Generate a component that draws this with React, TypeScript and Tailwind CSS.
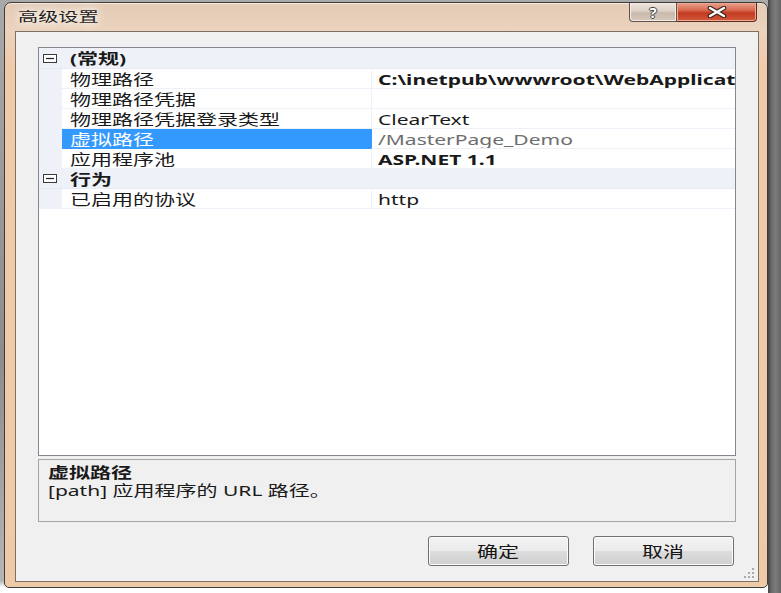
import type { ReactNode } from 'react'

/**
 * 高级设置 — Win7 style "Advanced Settings" dialog with a property grid.
 * The source screenshot is stretched horizontally, so text is widened with scale-x.
 */

type Row =
  | { kind: 'cat'; label: string }
  | { kind: 'prop'; name: string; value: string; tone?: 'bold' | 'readonly'; selected?: boolean }

const rows: Row[] = [
  { kind: 'cat', label: '(常规)' },
  { kind: 'prop', name: '物理路径', value: 'C:\\inetpub\\wwwroot\\WebApplication1', tone: 'bold' },
  { kind: 'prop', name: '物理路径凭据', value: '' },
  { kind: 'prop', name: '物理路径凭据登录类型', value: 'ClearText' },
  { kind: 'prop', name: '虚拟路径', value: '/MasterPage_Demo', tone: 'readonly', selected: true },
  { kind: 'prop', name: '应用程序池', value: 'ASP.NET 1.1', tone: 'bold' },
  { kind: 'cat', label: '行为' },
  { kind: 'prop', name: '已启用的协议', value: 'http' },
]

const font = "font-['Noto_Sans','Noto_Sans_CJK_SC',sans-serif]"

// widened text, as in the stretched screenshot
function W({ children, className = '' }: { children: ReactNode; className?: string }) {
  return (
    <span className={`inline-block origin-left scale-x-[1.4] whitespace-nowrap ${className}`}>
      {children}
    </span>
  )
}

function Collapse() {
  return (
    <svg width="14" height="9" viewBox="0 0 14 9" className="ml-[4px]">
      <rect x="0.5" y="0.5" width="13" height="8" fill="#fff" stroke="#3c3c3c" />
      <line x1="3" y1="4.5" x2="11" y2="4.5" stroke="#1e1e1e" strokeWidth="1.2" />
    </svg>
  )
}

function GridRow({ row, first }: { row: Row; first: boolean }) {
  const h = first ? 'h-[21px]' : 'h-[20px]'
  if (row.kind === 'cat') {
    return (
      <div className={`flex items-center ${h} bg-[#eef2f8] border-b border-[#e6ebf3]`}>
        <div className="w-[23px] flex items-center">
          <Collapse />
        </div>
        <div className="pl-[8px] leading-[20px] font-bold text-[#1a1a1a]">
          <W>{row.label}</W>
        </div>
      </div>
    )
  }
  const valueColor =
    row.tone === 'readonly' ? 'text-[#6d6d6d]' : 'text-[#1a1a1a]'
  return (
    <div className={`flex ${h}`}>
      <div className="w-[23px] bg-[#eef2f8]" />
      <div
        className={`w-[309px] overflow-hidden pl-[8px] leading-[20px] border-b ${
          row.selected ? 'bg-[#3399ff] text-white border-[#3399ff]' : 'bg-white text-[#1a1a1a] border-[#eef2f8]'
        }`}
      >
        <W>{row.name}</W>
      </div>
      <div
        className={`flex-1 overflow-hidden pl-[6px] leading-[20px] bg-white border-b border-[#eef2f8] border-l ${
          row.selected ? 'border-l-[#3399ff]' : 'border-l-[#eef2f8]'
        } ${valueColor} ${row.tone === 'bold' ? 'font-bold' : ''}`}
      >
        <W>{row.value}</W>
      </div>
    </div>
  )
}

function DialogButton({ label }: { label: string }) {
  return (
    <button className="w-[141px] h-[30px] rounded-[3px] border border-[#707070] bg-[linear-gradient(to_bottom,#f2f2f2_0%,#ebebeb_50%,#dddddd_51%,#cfcfcf_100%)] shadow-[inset_0_0_0_1px_#fbfbfb] flex items-center justify-center text-[#151515]">
      <span className="inline-block origin-center scale-x-[1.4]">{label}</span>
    </button>
  )
}

export default function App() {
  return (
    <div className={`w-[781px] h-[593px] overflow-hidden flex bg-white text-[15px] ${font}`}>
      <div className="w-[768px] h-[593px] bg-[linear-gradient(to_bottom,#a9a9a9,#8c8c8c_60%,#b5b5b5_98%,#ffffff_99%)] pt-[2px] pl-[4px]">
        {/* Window frame */}
        <div className="relative w-[764px] h-[586px] flex flex-col rounded-t-[7px] rounded-b-[5px] border border-[#3c3c3c] bg-[linear-gradient(to_bottom,#e3cbb6_0px,#ebd3bd_28px,#efcbaa_60px,#efcaa9_100%)] shadow-[inset_0_1px_0_#f7ebe0]">
          {/* Title bar */}
          <div className="h-[28px] flex items-center pl-[13px] shrink-0">
            <span className="inline-block origin-left scale-x-[1.55] text-[13px] text-[#1c1c1c] [text-shadow:0_0_6px_#fff,0_0_10px_#fff]">
              高级设置
            </span>
          </div>

          {/* Caption buttons */}
          <div className="absolute top-0 right-[10px] flex h-[19px]">
            <div className="w-[48px] h-full rounded-bl-[4px] border border-t-0 border-[#5e524a] bg-[linear-gradient(to_bottom,#eee5dd_0%,#ddd1c6_45%,#c9baac_55%,#d6c8bb_100%)] shadow-[inset_0_0_0_1px_#f3ebe4] flex items-center justify-center">
              <span className="text-[15px] font-bold leading-none text-white [text-shadow:1px_0_0_#3c3c3c,-1px_0_0_#3c3c3c,0_1px_0_#3c3c3c,0_-1px_0_#3c3c3c]">
                ?
              </span>
            </div>
            <div className="w-[80px] h-full rounded-br-[4px] border border-l-0 border-t-0 border-[#5e2a1e] bg-[linear-gradient(to_bottom,#e9a18b_0%,#d86a50_40%,#c33b20_55%,#d2583b_100%)] shadow-[inset_0_0_0_1px_#eea995] flex items-center justify-center">
              <svg width="24" height="12" viewBox="0 0 24 12">
                <path d="M5 2 L19 10 M19 2 L5 10" stroke="#3e2420" strokeWidth="4.6" strokeLinecap="round" />
                <path d="M5 2 L19 10 M19 2 L5 10" stroke="#ffffff" strokeWidth="2.4" strokeLinecap="round" />
              </svg>
            </div>
          </div>

          {/* Client area */}
          <div className="flex-1 pl-[10px] pr-[8px] pb-[5px] flex">
            <div className="relative flex-1 border border-[#7d6f64] bg-[#f0f0f0] px-[22px] pt-[15px] flex flex-col">
              {/* Property grid */}
              <div className="h-[409px] border border-[#828790] bg-white overflow-hidden">
                {rows.map((r, i) => (
                  <GridRow key={i} row={r} first={i === 0} />
                ))}
              </div>

              {/* Description pane */}
              <div className="mt-[3px] h-[63px] border border-[#a5a5a5] bg-[#f0f0f0] pl-[9px] pt-[3px] text-[#1a1a1a] leading-[18px]">
                <div className="font-bold">
                  <W>虚拟路径</W>
                </div>
                <div>
                  <W>[path] 应用程序的 URL 路径。</W>
                </div>
              </div>

              {/* Buttons */}
              <div className="mt-[14px] flex justify-end gap-[24px] pr-[2px]">
                <DialogButton label="确定" />
                <DialogButton label="取消" />
              </div>

              {/* Resize grip */}
              <svg width="12" height="12" viewBox="0 0 12 12" className="absolute right-[3px] bottom-[2px]">
                {[
                  [9, 1],
                  [5, 5],
                  [9, 5],
                  [1, 9],
                  [5, 9],
                  [9, 9],
                ].map(([x, y], i) => (
                  <rect key={i} x={x} y={y} width="2" height="2" fill="#a9a9a9" />
                ))}
              </svg>
            </div>
          </div>
        </div>
      </div>
      <div className="flex-1 bg-[linear-gradient(to_right,#444444,#6e6e6e_30%,#7c7c7c_60%,#646464)]" />
    </div>
  )
}
